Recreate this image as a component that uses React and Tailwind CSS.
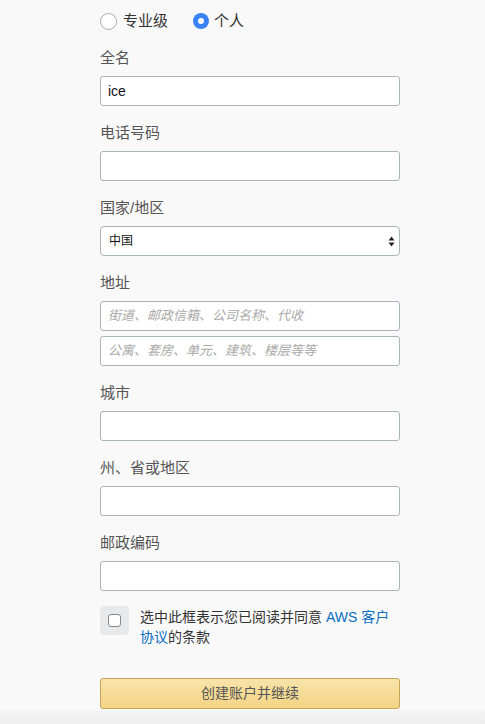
const fields = [
  { label: '电话号码' },
]

function Label({ children }) {
  return <div className="h-5 leading-5 text-[15px] text-[#555] mb-2">{children}</div>
}

function Input({ value, placeholder }) {
  return (
    <div className="h-[30px] w-[300px] bg-white border border-[#a9b6b7] rounded-[3px] flex items-center px-[7px]">
      {value ? (
        <span className="text-[14px] text-[#111]">{value}</span>
      ) : placeholder ? (
        <span className="text-[13px] italic text-[#aaa]">{placeholder}</span>
      ) : null}
    </div>
  )
}

function Field({ label, children }) {
  return (
    <div className="mt-[17px]">
      <Label>{label}</Label>
      {children}
    </div>
  )
}

export default function App() {
  return (
    <div
      className="w-[485px] h-[724px] bg-[#f9f9f9] flex flex-col overflow-hidden"
      style={{ fontFamily: '"Liberation Sans", "Noto Sans CJK SC", sans-serif' }}
    >
      <div className="pl-[100px] pt-[11px] flex-1">
        <div className="h-5 flex items-center text-[15px] text-[#333]">
          <span className="w-[17px] h-[17px] rounded-full border border-[#aaa] bg-white" />
          <span className="ml-[6px]">专业级</span>
          <span className="ml-[25px] w-4 h-4 rounded-full bg-[#3a82f7] flex items-center justify-center">
            <span className="w-[6px] h-[6px] rounded-full bg-white" />
          </span>
          <span className="ml-[5px]">个人</span>
        </div>

        <Field label="全名">
          <Input value="ice" />
        </Field>
        {fields.map((f) => (
          <Field key={f.label} label={f.label}>
            <Input />
          </Field>
        ))}
        <Field label="国家/地区">
          <div className="h-[30px] w-[300px] bg-white border border-[#a9b6b7] rounded-[4px] flex items-center justify-between pl-[8px] pr-[4px]">
            <span className="text-[12px] text-[#111]">中国</span>
            <svg width="7" height="11" viewBox="0 0 7 11">
              <path d="M3.5 0.5 L6.5 4.5 H0.5 Z" fill="#222" />
              <path d="M3.5 10.5 L6.5 6.5 H0.5 Z" fill="#222" />
            </svg>
          </div>
        </Field>
        <Field label="地址">
          <Input placeholder="街道、邮政信箱、公司名称、代收" />
          <div className="mt-[5px]">
            <Input placeholder="公寓、套房、单元、建筑、楼层等等" />
          </div>
        </Field>
        <Field label="城市">
          <Input />
        </Field>
        <Field label="州、省或地区">
          <Input />
        </Field>
        <Field label="邮政编码">
          <Input />
        </Field>

        <div className="mt-[14px] flex w-[300px]">
          <div className="w-[29px] h-[29px] shrink-0 rounded-[4px] bg-[#e8e9ea] flex items-center justify-center mt-px">
            <span className="w-[13px] h-[13px] rounded-[3px] border border-[#888] bg-white" />
          </div>
          <p className="ml-[11px] text-[14px] leading-5 text-[#333] pt-[2px]">
            选中此框表示您已阅读并同意 <a className="text-[#0a6fc2]">AWS 客户</a>
            <br />
            <a className="text-[#0a6fc2]">协议</a>的条款
          </p>
        </div>

        <button className="mt-[31px] w-[300px] h-[31px] rounded-[3px] border border-[#c9a657] bg-gradient-to-b from-[#f8e3aa] to-[#f4d584] text-[14px] text-[#555]">
          创建账户并继续
        </button>
      </div>
      <div className="h-[13px] bg-gradient-to-b from-[#f3f3f3] to-[#eeeeee]" />
    </div>
  )
}
